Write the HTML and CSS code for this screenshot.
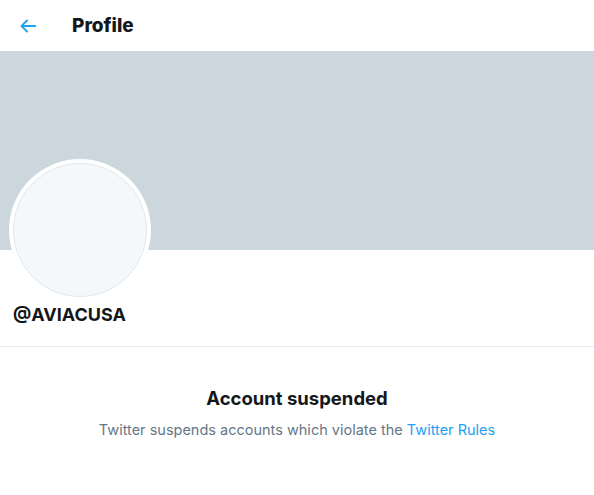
FILE: index.html
```html
<!DOCTYPE html>
<html>
<head>
<meta charset="utf-8">
<link rel="stylesheet" href="styles.css">
</head>
<body>
<div class="page">
  <header class="topbar">
    <button class="back" aria-label="Back">
      <svg viewBox="0 0 24 24" width="22" height="22"><path fill="#1DA1F2" d="M20 11H7.414l4.293-4.293a1 1 0 0 0-1.414-1.414l-6 6a1 1 0 0 0 0 1.414l6 6a.996.996 0 0 0 1.414 0 1 1 0 0 0 0-1.414L7.414 13H20a1 1 0 1 0 0-2z"/></svg>
    </button>
    <h1 class="title">Profile</h1>
  </header>
  <div class="banner"></div>
  <section class="identity">
    <div class="avatar"><div class="avatar-inner"></div></div>
    <div class="handle">@AVIACUSA</div>
  </section>
  <section class="notice">
    <h2 class="notice-title">Account suspended</h2>
    <p class="notice-text">Twitter suspends accounts which violate the <a href="#" class="link">Twitter Rules</a></p>
  </section>
</div>
</body>
</html>
```
FILE: styles.css
```css
* { box-sizing: border-box; }
html, body { margin: 0; padding: 0; background: #fff; }
body { font-family: Inter, "Liberation Sans", sans-serif; color: #14171A; }
.page { width: 594px; }
.topbar { height: 51px; display: flex; align-items: center; padding-left: 17px; }
.back { border: 0; background: none; padding: 0; width: 22px; height: 22px; display: flex; margin-right: 33px; cursor: pointer; }
.title { margin: 0; font-size: 19px; font-weight: 800; line-height: 24px; }
.banner { height: 199px; background: #CCD6DD; }
.identity { position: relative; height: 97px; border-bottom: 1px solid #E6ECF0; padding: 53px 13px 0; }
.avatar { position: absolute; left: 9px; top: -91px; width: 142px; height: 142px; border-radius: 50%; background: #fff; padding: 4px; }
.avatar-inner { width: 100%; height: 100%; border-radius: 50%; background: #F5F8FA; border: 1px solid #E1E8ED; }
.handle { font-size: 18px; font-weight: 700; line-height: 24px; }
.notice { text-align: center; padding-top: 39px; }
.notice-title { margin: 0; font-size: 18.5px; font-weight: 700; line-height: 24px; }
.notice-text { margin: 10px 0 0; font-size: 14.5px; color: #657786; line-height: 20px; }
.link { color: #1DA1F2; text-decoration: none; }
```
